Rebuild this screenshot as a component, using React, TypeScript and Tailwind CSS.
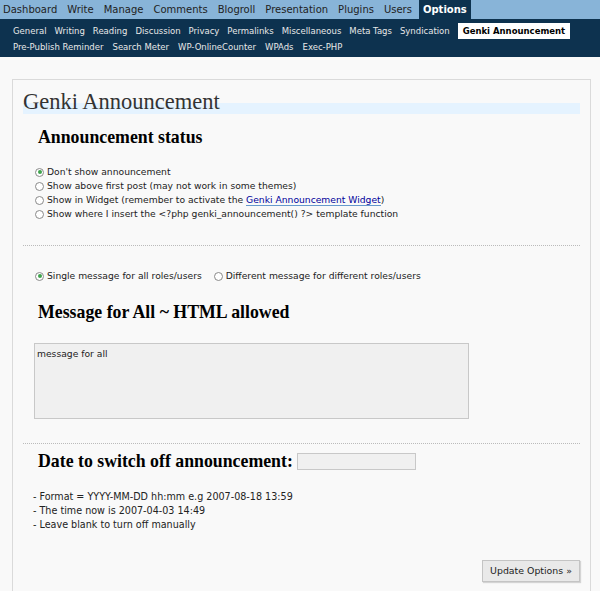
const topNav = ["Dashboard", "Write", "Manage", "Comments", "Blogroll", "Presentation", "Plugins"];
const subNav = [
  "General",
  "Writing",
  "Reading",
  "Discussion",
  "Privacy",
  "Permalinks",
  "Miscellaneous",
  "Meta Tags",
  "Syndication",
];
const subNav2 = ["Pre-Publish Reminder", "Search Meter", "WP-OnlineCounter", "WPAds", "Exec-PHP"];

function Radio({ checked }: { checked?: boolean }) {
  return (
    <span className="flex h-[9px] w-[9px] shrink-0 items-center justify-center rounded-full border border-[#8a8a8a] bg-white">
      {checked && <span className="h-[4px] w-[4px] rounded-full bg-[#3fa34d]" />}
    </span>
  );
}

function Option({ checked, children }: { checked?: boolean; children: React.ReactNode }) {
  return (
    <div className="flex h-[14px] items-center gap-[3px]">
      <Radio checked={checked} />
      <span>{children}</span>
    </div>
  );
}

export default function App() {
  return (
    <div className="h-[591px] w-[600px] overflow-hidden bg-[#f9f9f9] font-['DejaVu_Sans',sans-serif] text-[#333]">
      <nav className="flex h-[19px] items-stretch bg-[#88b4d8] pl-[3px] text-[10px] text-[#222]">
        {topNav.map((item) => (
          <span key={item} className="mr-[10px] flex items-center">
            {item}
          </span>
        ))}
        <span className="mr-[7px] flex items-center">Users</span>
        <span className="flex items-center bg-[#0d324f] px-[4px] font-bold text-white">Options</span>
      </nav>

      <div className="h-[38px] bg-[#0d324f] px-[13px] pt-[4px] text-[8.5px] text-[#e8e8e8]">
        <div className="flex h-[16px] items-center gap-[8px]">
          {subNav.map((item) => (
            <span key={item}>{item}</span>
          ))}
          <span className="flex h-[16px] items-center bg-white px-[5px] font-bold text-black">
            Genki Announcement
          </span>
        </div>
        <div className="flex h-[16px] items-center gap-[9px]">
          {subNav2.map((item) => (
            <span key={item}>{item}</span>
          ))}
        </div>
      </div>

      <div className="ml-[12px] mr-[9px] mt-[22px] h-[600px] border border-b-0 border-[#dadada] pt-[21px]">
        <h2 className="mx-[10px] border-b-[11px] border-[#e5f3ff] font-['Liberation_Serif',serif] text-[22.5px] font-normal leading-[2px] text-[#333]">
          Genki Announcement
        </h2>

        <h3 className="ml-[25px] mt-[14px] flex h-[18px] items-center font-['Liberation_Serif',serif] text-[17.8px] font-bold text-black">
          Announcement status
        </h3>

        <div className="ml-[22px] mt-[19px] text-[9.2px] text-[#222]">
          <Option checked>Don't show announcement</Option>
          <Option>Show above first post (may not work in some themes)</Option>
          <Option>
            Show in Widget (remember to activate the{" "}
            <a className="border-b border-[#69c] text-[#00019b]">Genki Announcement Widget</a>)
          </Option>
          <Option>Show where I insert the &lt;?php genki_announcement() ?&gt; template function</Option>
        </div>

        <div className="mx-[10px] mt-[24px] border-t border-dotted border-[#bbb]" />

        <div className="ml-[22px] mt-[23px] flex gap-[12px] text-[9.2px] text-[#222]">
          <Option checked>Single message for all roles/users</Option>
          <Option>Different message for different roles/users</Option>
        </div>

        <h3 className="ml-[25px] mt-[20px] flex h-[18px] items-center font-['Liberation_Serif',serif] text-[17.8px] font-bold text-black">
          Message for All ~ HTML allowed
        </h3>

        <div className="ml-[21px] mt-[22px] h-[76px] w-[435px] border border-[#c8c8c8] bg-[#f0f0f0] px-[2px] pt-[3px] text-[9.2px] text-[#222]">
          message for all
        </div>

        <div className="mx-[10px] mt-[24px] border-t border-dotted border-[#bbb]" />

        <div className="ml-[25px] mt-[8px] flex h-[18px] items-center gap-[4px]">
          <span className="font-['Liberation_Serif',serif] text-[17.8px] font-bold text-black">
            Date to switch off announcement:
          </span>
          <span className="h-[17px] w-[119px] border border-[#c8c8c8] bg-[#f0f0f0]" />
        </div>

        <div className="ml-[20px] mt-[20px] text-[9.6px] text-[#222]">
          <div className="flex h-[14px] items-center">- Format = YYYY-MM-DD hh:mm e.g 2007-08-18 13:59</div>
          <div className="flex h-[14px] items-center">- The time now is 2007-04-03 14:49</div>
          <div className="flex h-[14px] items-center">- Leave blank to turn off manually</div>
        </div>

        <div className="mr-[10px] mt-[28px] flex justify-end">
          <span className="flex h-[22px] w-[98px] items-center justify-center border border-[#c4c4c4] bg-[#e9e9e9] text-[9.4px] text-[#222] shadow-[1px_1px_1px_rgba(0,0,0,0.15)]">
            Update Options »
          </span>
        </div>
      </div>
    </div>
  );
}
